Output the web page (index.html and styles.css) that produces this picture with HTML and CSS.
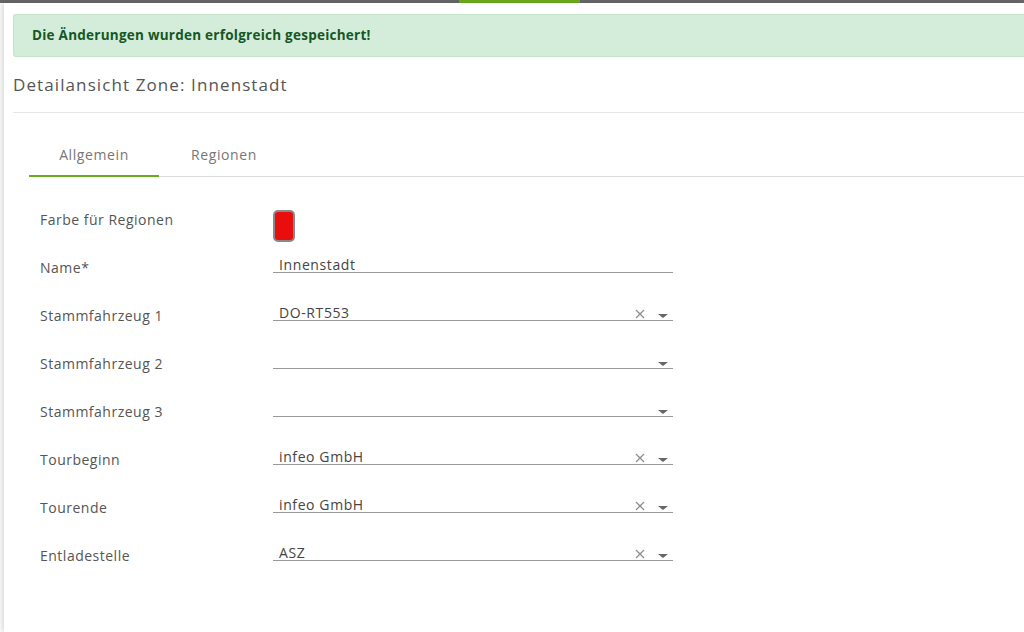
FILE: index.html
```html
<!DOCTYPE html>
<html lang="de">
<head>
    <meta charset="UTF-8">
    <title>Detailansicht Zone</title>
    <link rel="stylesheet" href="styles.css">
</head>
<body>
    <div class="topbar"><span class="topbar-active"></span></div>

    <div class="panel">
        <div class="alert">Die Änderungen wurden erfolgreich gespeichert!</div>

        <h1 class="title">Detailansicht Zone: Innenstadt</h1>

        <div class="tabs">
            <div class="tab active">Allgemein</div>
            <div class="tab">Regionen</div>
        </div>

        <div class="form">
            <div class="row color-row">
                <label>Farbe für Regionen</label>
                <div class="swatch"></div>
            </div>
            <div class="row tight">
                <label>Name*</label>
                <div class="field">Innenstadt</div>
            </div>
            <div class="row">
                <label>Stammfahrzeug 1</label>
                <div class="field select">DO-RT553
                    <svg class="clear" width="10" height="10" viewBox="0 0 10 10"><path d="M1 1L9 9M9 1L1 9"/></svg>
                    <span class="caret"></span>
                </div>
            </div>
            <div class="row">
                <label>Stammfahrzeug 2</label>
                <div class="field select"><span class="caret"></span></div>
            </div>
            <div class="row">
                <label>Stammfahrzeug 3</label>
                <div class="field select"><span class="caret"></span></div>
            </div>
            <div class="row">
                <label>Tourbeginn</label>
                <div class="field select">infeo GmbH
                    <svg class="clear" width="10" height="10" viewBox="0 0 10 10"><path d="M1 1L9 9M9 1L1 9"/></svg>
                    <span class="caret"></span>
                </div>
            </div>
            <div class="row">
                <label>Tourende</label>
                <div class="field select">infeo GmbH
                    <svg class="clear" width="10" height="10" viewBox="0 0 10 10"><path d="M1 1L9 9M9 1L1 9"/></svg>
                    <span class="caret"></span>
                </div>
            </div>
            <div class="row">
                <label>Entladestelle</label>
                <div class="field select">ASZ
                    <svg class="clear" width="10" height="10" viewBox="0 0 10 10"><path d="M1 1L9 9M9 1L1 9"/></svg>
                    <span class="caret"></span>
                </div>
            </div>
        </div>
    </div>
</body>
</html>
```

FILE: styles.css
```css
html, body {
    margin: 0;
    height: 100%;
    overflow: hidden;
}

body {
    font-family: 'Open Sans', sans-serif;
    background: #fff;
    color: #555;
    display: flex;
    flex-direction: column;
}

.topbar {
    height: 3px;
    background: #666;
    flex-shrink: 0;
    padding-left: 459px;
}

.topbar-active {
    display: block;
    width: 121px;
    height: 3px;
    background: #6aaa1e;
}

.panel {
    flex: 1;
    margin-left: 4px;
    padding: 11px 0 0 9px;
    background: #fff;
    box-shadow: -3px 0 4px rgba(0, 0, 0, 0.12);
}

.alert {
    background: #d4edda;
    border: 1px solid #c3e6cb;
    border-right: none;
    border-radius: 3px 0 0 3px;
    color: #155724;
    font-weight: 700;
    font-size: 13.5px;
    line-height: 41px;
    padding-left: 18px;
    letter-spacing: 0.25px;
}

.title {
    margin: 0;
    font-size: 17px;
    font-weight: 400;
    color: #555;
    line-height: 22px;
    letter-spacing: 1.1px;
    padding: 17px 0 16px;
    border-bottom: 1px solid #e6e6e6;
}

.tabs {
    display: flex;
    margin-top: 21px;
    margin-left: 16px;
    border-bottom: 1px solid #ddd;
}

.tab {
    width: 130px;
    text-align: center;
    font-size: 14px;
    color: #777;
    line-height: 20px;
    letter-spacing: 0.6px;
    padding: 11px 0 10px;
}

.tab.active {
    border-bottom: 2px solid #6aaa1e;
    margin-bottom: -1px;
}

.form {
    padding: 33px 0 0 27px;
}

.row {
    display: grid;
    grid-template-columns: 233px 400px;
    height: 48px;
    align-items: end;
}

.row.tight {
    height: 31px;
}

.row.color-row {
    height: 32px;
    align-items: start;
}

label {
    font-size: 14px;
    line-height: 20px;
    letter-spacing: 0.5px;
    color: #555;
    margin-bottom: -5px;
}

.color-row label {
    margin: 0;
}

.swatch {
    width: 18px;
    height: 28px;
    background: #e80e0e;
    border: 2px solid #888;
    border-radius: 5px;
}

.field {
    position: relative;
    height: 22px;
    line-height: 14px;
    padding: 7px 6px 0;
    box-sizing: border-box;
    border-bottom: 1px solid #999;
    font-size: 14px;
    letter-spacing: 0.6px;
    color: #444;
}

.clear {
    position: absolute;
    right: 28px;
    top: 10px;
    stroke: #8a8a8a;
    stroke-width: 1.2;
    fill: none;
}

.caret {
    position: absolute;
    right: 5px;
    bottom: 2px;
    width: 0;
    height: 0;
    border-left: 5px solid transparent;
    border-right: 5px solid transparent;
    border-top: 4px solid #666;
}
```
